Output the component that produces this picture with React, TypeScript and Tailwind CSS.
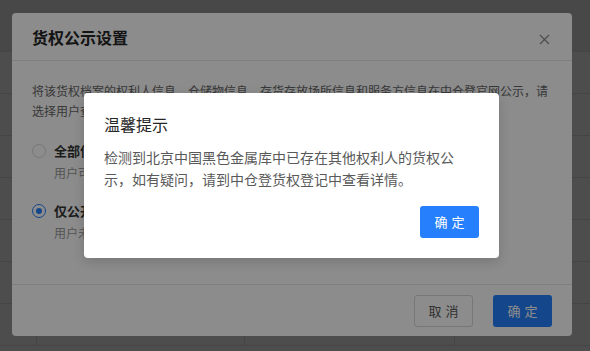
import React from 'react';

const font = "font-['Noto_Sans_CJK_SC','Noto_Sans',sans-serif]";

function PageBehind() {
  const rows = Array.from({ length: 7 });
  return (
    <div className="flex flex-col">
      <div className="h-[52px] border-b border-[#e8e8e8] bg-[#f0f0f0]" />
      {rows.map((_, i) => (
        <div key={i} className="grid h-[42px] grid-cols-[37px_208px_210px_1fr] border-b border-[#e8e8e8]">
          <div className="border-r border-[#e8e8e8]" />
          <div className="border-r border-[#e8e8e8]" />
          <div className="border-r border-[#e8e8e8]" />
          <div />
        </div>
      ))}
    </div>
  );
}

function RadioOption({ checked, label, desc }: { checked: boolean; label: string; desc: string }) {
  return (
    <div className="flex flex-col">
      <div className="flex h-[20px] items-center gap-[8px]">
        <span
          className={
            checked
              ? 'flex h-[14px] w-[14px] items-center justify-center rounded-full border border-[#2680fe] bg-white'
              : 'h-[14px] w-[14px] rounded-full border border-[#d9d9d9] bg-white'
          }
        >
          {checked && <span className="h-[6px] w-[6px] rounded-full bg-[#2680fe]" />}
        </span>
        <span className="text-[13px] font-bold text-[#333]">{label}</span>
      </div>
      <div className="mt-[2px] pl-[22px] text-[12px] leading-[20px] text-[#999]">{desc}</div>
    </div>
  );
}

export default function App() {
  return (
    <div className={`relative h-[351px] w-[590px] overflow-hidden bg-white ${font}`}>
      <PageBehind />

      <div className="absolute inset-0 bg-[rgba(0,0,0,0.45)]" />

      {/* 货权公示设置 */}
      <div className="absolute left-[12px] top-[13px] flex h-[323px] w-[560px] flex-col rounded-[4px] bg-white">
        <div className="flex h-[48px] shrink-0 items-center justify-between border-b border-[#e8e8e8] pl-[20px] pr-[22px]">
          <span className="text-[16px] font-semibold text-[#262626]">货权公示设置</span>
          <svg width="11" height="11" viewBox="0 0 11 11" className="mt-[6px]">
            <path d="M1 1L10 10M10 1L1 10" stroke="#8c8c8c" strokeWidth="1.2" />
          </svg>
        </div>
        <div className="flex flex-1 flex-col px-[20px] pt-[20px]">
          <p className="text-[12px] leading-[20px] text-[#666]">
            将该货权档案的权利人信息、仓储物信息、存货存放场所信息和服务方信息在中仓登官网公示，请选择用户查看公示信息的范围：
          </p>
          <div className="mt-[20px] flex flex-col gap-[18px]">
            <RadioOption checked={false} label="全部信息公开" desc="用户可在中仓登官网查看全部公示信息" />
            <RadioOption checked label="仅公开权利人信息" desc="用户未登录时仅可查看权利人信息" />
          </div>
        </div>
        <div className="flex h-[52px] shrink-0 items-center justify-end gap-[20px] border-t border-[#e8e8e8] px-[20px]">
          <button className="flex h-[32px] w-[59px] items-center justify-center rounded-[3px] border border-[#d9d9d9] bg-white text-[13px] text-[#595959]">
            <span className="mr-[-4px] tracking-[4px]">取消</span>
          </button>
          <button className="flex h-[32px] w-[59px] items-center justify-center rounded-[3px] bg-[#2680fe] text-[13px] text-white">
            <span className="mr-[-4px] tracking-[4px]">确定</span>
          </button>
        </div>
      </div>

      <div className="absolute inset-0 bg-[rgba(0,0,0,0.45)]" />

      {/* 温馨提示 */}
      <div className="absolute left-[84px] top-[93px] flex w-[415px] flex-col rounded-[4px] bg-white px-[20px] pb-[20px] pt-[17px] shadow-[0_4px_12px_rgba(0,0,0,0.15)]">
        <div className="text-[16px] leading-[28px] text-[#262626]">温馨提示</div>
        <p className="mt-[8px] w-[356px] text-[14px] leading-[22px] text-[#595959]">
          检测到北京中国黑色金属库中已存在其他权利人的货权公示，如有疑问，请到中仓登货权登记中查看详情。
        </p>
        <div className="mt-[16px] flex justify-end">
          <button className="flex h-[32px] w-[59px] items-center justify-center rounded-[3px] bg-[#2680fe] text-[13px] text-white">
            <span className="mr-[-4px] tracking-[4px]">确定</span>
          </button>
        </div>
      </div>
    </div>
  );
}
